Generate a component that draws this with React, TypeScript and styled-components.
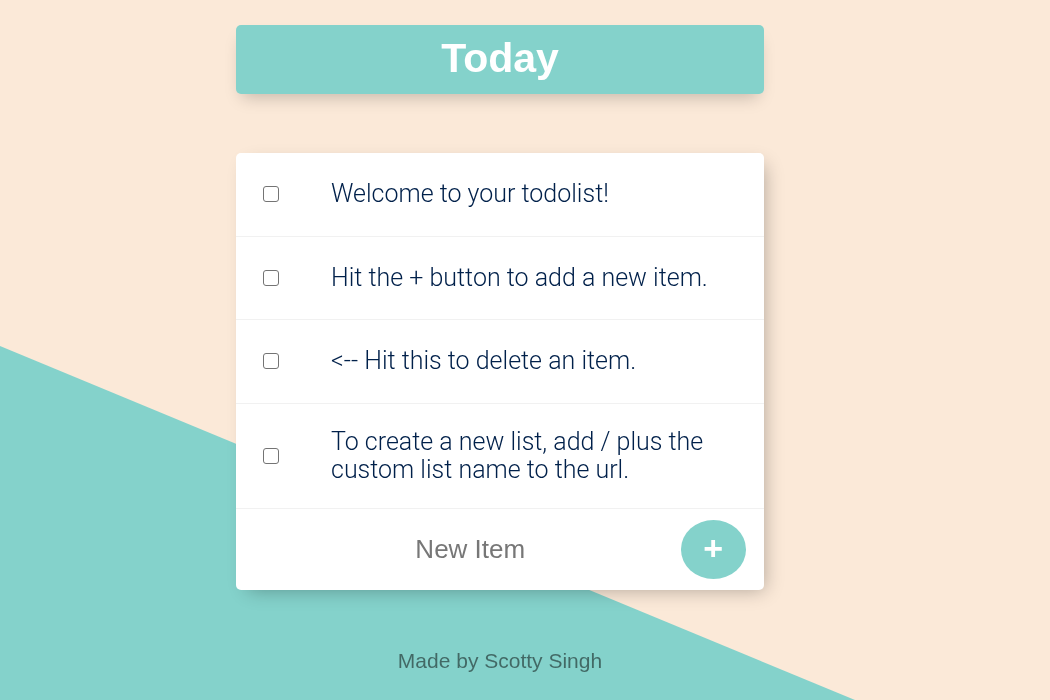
import styled, { createGlobalStyle } from "styled-components";

const TEAL = "#84d2cb";
const PEACH = "#fbe9d8";

const GlobalStyle = createGlobalStyle`
    html {
        background-color: ${PEACH};
    }

    body {
        margin: 0;
        padding: 0;
        min-height: 700px;
        font-family: "Liberation Sans", Arial, sans-serif;
    }

    /* diagonal teal wedge behind everything */
    body::before {
        content: "";
        position: fixed;
        inset: 0;
        z-index: -1;
        background: ${TEAL};
        clip-path: polygon(0 346px, 855px 700px, 0 700px);
    }
`;

// Page column
const Page = styled.div`
    width: 1000px;
    padding-top: 25px;
`;

const Column = styled.div`
    width: 528px;
    margin: 0 auto;
`;

// Heading
const Heading = styled.div`
    height: 69px;
    display: flex;
    align-items: center;
    justify-content: center;
    background-color: ${TEAL};
    border-radius: 5px;
    box-shadow: 0 9px 16px -6px rgba(0, 0, 0, 0.22);
`;

const Title = styled.h1`
    margin: 0;
    color: #fff;
    font-size: 41px;
    font-weight: 700;
    line-height: 1;
    padding-bottom: 2px;
`;

// List card
const Card = styled.div`
    margin-top: 59px;
    background: #fff;
    border-radius: 5px;
    box-shadow: 6px 6px 18px -6px rgba(0, 0, 0, 0.3);
`;

const Item = styled.div`
    box-sizing: border-box;
    min-height: 83.5px;
    display: flex;
    align-items: center;
    border-bottom: 1px solid #f1f1f1;
`;

const Check = styled.input`
    appearance: none;
    flex: none;
    box-sizing: border-box;
    width: 16px;
    height: 16px;
    margin: 0 52px 0 27px;
    border: 1.5px solid #747474;
    border-radius: 3px;
    background: #fff;
`;

const ItemText = styled.p`
    margin: 0;
    padding: 24px 30px 24px 0;
    font-family: Roboto, "Liberation Sans", sans-serif;
    font-size: 25px;
    font-weight: 300;
    line-height: 28px;
    font-variant-ligatures: none;
    color: #00204a;
`;

// New item form
const Form = styled.form`
    height: 81px;
    display: flex;
    align-items: center;
    padding-left: 24px;
`;

const NewInput = styled.input`
    width: 420px;
    height: 60px;
    border: none;
    outline: none;
    text-align: center;
    font-family: "Liberation Sans", Arial, sans-serif;
    font-size: 26px;
    color: #00204a;
    background: transparent;

    &::placeholder {
        color: #777;
        opacity: 1;
    }
`;

const AddButton = styled.button`
    width: 66px;
    height: 59px;
    margin-left: auto;
    margin-right: 18px;
    border: none;
    border-radius: 50%;
    background-color: ${TEAL};
    color: #fff;
    font-family: "Liberation Sans", Arial, sans-serif;
    font-size: 34px;
    font-weight: 700;
    line-height: 1;
    padding: 0 0 3px;
    cursor: pointer;
`;

const Footer = styled.footer`
    margin-top: 59px;
    text-align: center;
    font-size: 21px;
    color: rgba(0, 0, 0, 0.5);
`;

const items: string[] = [
    "Welcome to your todolist!",
    "Hit the + button to add a new item.",
    "<-- Hit this to delete an item.",
    "To create a new list, add / plus the custom list name to the url.",
];

const App = () => {
    return (
        <>
            <GlobalStyle />
            <Page>
                <Column>
                    <Heading>
                        <Title>Today</Title>
                    </Heading>
                    <Card>
                        {items.map((item) => (
                            <Item key={item}>
                                <Check type="checkbox" />
                                <ItemText>{item}</ItemText>
                            </Item>
                        ))}
                        <Form onSubmit={(e) => e.preventDefault()}>
                            <NewInput type="text" placeholder="New Item" autoComplete="off" />
                            <AddButton type="submit">+</AddButton>
                        </Form>
                    </Card>
                    <Footer>Made by Scotty Singh</Footer>
                </Column>
            </Page>
        </>
    );
};

export default App;
